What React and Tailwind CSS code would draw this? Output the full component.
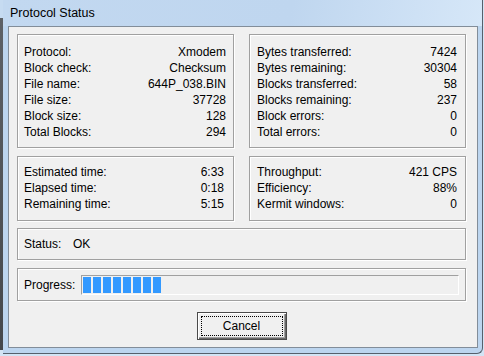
import React from 'react';

const leftTop = [
  ['Protocol:', 'Xmodem'],
  ['Block check:', 'Checksum'],
  ['File name:', '644P_038.BIN'],
  ['File size:', '37728'],
  ['Block size:', '128'],
  ['Total Blocks:', '294'],
];

const rightTop = [
  ['Bytes transferred:', '7424'],
  ['Bytes remaining:', '30304'],
  ['Blocks transferred:', '58'],
  ['Blocks remaining:', '237'],
  ['Block errors:', '0'],
  ['Total errors:', '0'],
];

const leftMid = [
  ['Estimated time:', '6:33'],
  ['Elapsed time:', '0:18'],
  ['Remaining time:', '5:15'],
];

const rightMid = [
  ['Throughput:', '421 CPS'],
  ['Efficiency:', '88%'],
  ['Kermit windows:', '0'],
];

// etched frame, gray line with white highlight
const etched = 'border border-[#a0a0a0] shadow-[inset_1px_1px_0_#fff,1px_1px_0_#fff]';

const InfoBox = ({ rows, className }) => (
  <div className={`${etched} ${className}`}>
    {rows.map(([label, value]) => (
      <div key={label} className="flex justify-between h-4 leading-4">
        <span>{label}</span>
        <span>{value}</span>
      </div>
    ))}
  </div>
);

const App = () => {
  const blocks = 8;

  return (
    <div className="w-[484px] h-[356px] flex bg-[#d3e4f5] overflow-hidden font-['Liberation_Sans',Arial,sans-serif] text-[12px] text-black">
      {/* window behind, left edge */}
      <div className="w-[3px] flex flex-col">
        <div className="h-[18px] bg-[#c6dbf1]" />
        <div className="flex-1 mb-[6px] bg-gradient-to-b from-[#5d6166] to-[#45484c]" />
      </div>

      <div className="w-[480px] h-[354px] flex flex-col bg-[#bcd5ef] border-r border-b border-[#56606c] rounded-br-[6px]">
        {/* title bar */}
        <div className="h-[26px] pl-[7px] flex items-center bg-[linear-gradient(100deg,#c2d8f0_0%,#bfd6ef_60%,#d6e7f8_100%)]">
          <span className="leading-4 text-[12.5px]">Protocol Status</span>
        </div>

        <div className="flex-1 flex pl-[5px] pr-[4px] pb-[5px]">
          <div className="flex-1 flex flex-col border border-[#828d99] bg-[#f0f0f0] pl-[8px] pt-[7px]">
            <div className="grid grid-cols-[217px_217px] gap-x-[15px]">
              <InfoBox rows={leftTop} className="h-[114px] pt-[9px] pl-[6px] pr-[7px]" />
              <InfoBox rows={rightTop} className="h-[114px] pt-[9px] pl-[7px] pr-[8px]" />
            </div>

            <div className="grid grid-cols-[217px_217px] gap-x-[15px] mt-[8px]">
              <InfoBox rows={leftMid} className="h-[65px] pt-[7px] pl-[6px] pr-[9px]" />
              <InfoBox rows={rightMid} className="h-[65px] pt-[7px] pl-[7px] pr-[8px]" />
            </div>

            <div className={`${etched} w-[449px] h-[32px] mt-[7px] pl-[6px] flex items-center`}>
              <span className="w-[49px]">Status:</span>
              <span>OK</span>
            </div>

            <div className={`${etched} w-[449px] h-[33px] mt-[8px] pl-[6px] pt-[6px] flex items-start`}>
              <span className="w-[57px] h-[20px] leading-[20px]">Progress:</span>
              <div className="w-[378px] h-[20px] border border-t-[#a0a0a0] border-l-[#a0a0a0] border-r-white border-b-white p-[1px] flex gap-[2px]">
                {Array.from({ length: blocks }).map((_, i) => (
                  <div key={i} className="w-[8px] h-[16px] bg-[#3399ff]" />
                ))}
              </div>
            </div>

            <div className="w-[449px] flex justify-center mt-[11px]">
              <button className="w-[90px] h-[28px] border border-[#4a4a4a] bg-[#f0f0f0] p-[3px] shadow-[inset_1px_1px_0_#fff,inset_-1px_-1px_0_#696969,inset_-2px_-2px_0_#a0a0a0]">
                <div className="w-full h-full border border-dotted border-black flex items-center justify-center leading-4">
                  Cancel
                </div>
              </button>
            </div>
          </div>
        </div>
      </div>
    </div>
  );
};

export default App;
